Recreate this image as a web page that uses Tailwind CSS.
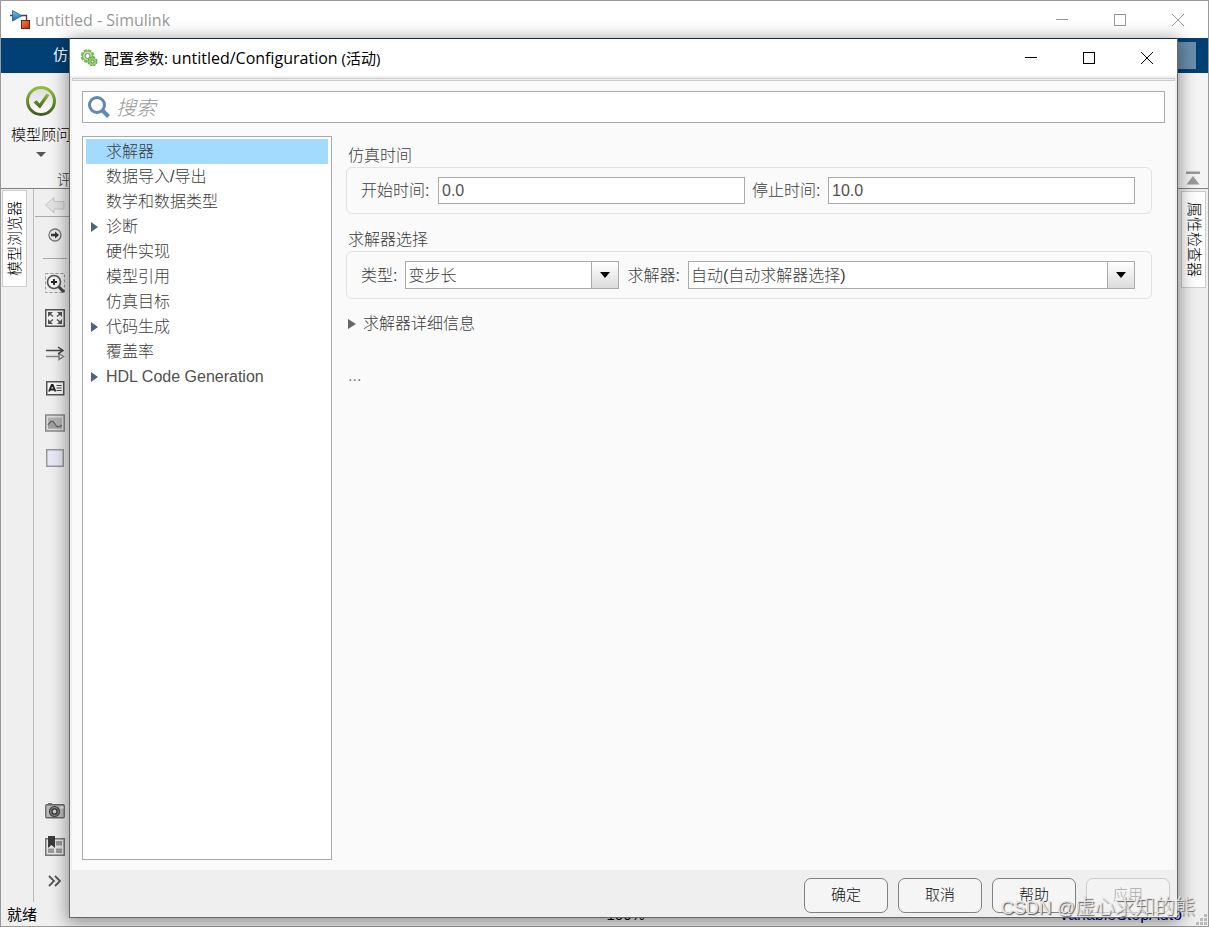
<!DOCTYPE html>
<html lang="zh-CN">
<head>
<meta charset="utf-8">
<title>untitled - Simulink</title>
<script src="https://cdn.jsdelivr.net/npm/@tailwindcss/browser@4"></script>
</head>
<body class="h-screen overflow-hidden bg-[#efefef] font-['Liberation_Sans','Noto_Sans_CJK_SC',sans-serif] text-[15px] text-black">

<!-- Main Simulink window -->
<div class="relative flex h-full flex-col overflow-hidden border border-[#9a9a9a]">
  <header class="flex h-[37px] shrink-0 items-center bg-white">
    <svg class="ml-[9px] h-5 w-[21px]" viewBox="0 0 21 20">
      <defs>
        <linearGradient id="tri" x1="0" y1="0" x2="0" y2="1"><stop offset="0" stop-color="#7fc4ea"/><stop offset="1" stop-color="#0f6ca8"/></linearGradient>
        <linearGradient id="sq" x1="0" y1="0" x2="1" y2="1"><stop offset="0" stop-color="#f08050"/><stop offset="1" stop-color="#c03008"/></linearGradient>
      </defs>
      <path d="M0 5.500h3M11 5.500h5.500V12" fill="none" stroke="#444" stroke-width="1.300"/>
      <path d="M2.500 0.500v10.500L12 5.800z" fill="url(#tri)" stroke="#1b5f8f" stroke-width="0.800"/>
      <rect x="11.500" y="10.500" width="8" height="8" fill="url(#sq)" stroke="#6d2410"/>
    </svg>
    <h1 class="ml-1 flex-1 font-['Open_Sans','Noto_Sans_CJK_SC',sans-serif] text-base text-[#999]">untitled - Simulink</h1>
    <div class="mr-3 flex gap-[22px]">
      <button type="button" aria-label="最小化" class="flex h-9 w-9 items-center justify-center"><svg class="h-3 w-3" viewBox="0 0 12 12"><path d="M0 5.500h12" stroke="#999"/></svg></button>
      <button type="button" aria-label="最大化" class="flex h-9 w-9 items-center justify-center"><svg class="h-3 w-3" viewBox="0 0 12 12"><rect x="0.500" y="0.500" width="11" height="11" fill="none" stroke="#999"/></svg></button>
      <button type="button" aria-label="关闭" class="flex h-9 w-9 items-center justify-center"><svg class="h-3 w-3" viewBox="0 0 12 12"><path d="M0 0l12 12M12 0L0 12" stroke="#999"/></svg></button>
    </div>
  </header>

  <nav class="flex h-[35px] shrink-0 items-center justify-between bg-[#004074] pr-3 pl-[52px] text-white">
    <a href="#sim">仿真</a>
    <div class="h-[27px] w-10 bg-[#6b8ead]"></div>
  </nav>

  <section class="flex h-[116px] shrink-0 items-end justify-between border-b border-[#808080] bg-[#f4f4f4]">
    <div class="flex h-full flex-col items-start pl-[10px]">
      <button type="button" class="flex flex-col items-center pt-3 font-light text-black">
        <svg class="h-8 w-8" viewBox="0 0 32 32">
          <defs><linearGradient id="ring" x1="0" y1="0" x2="0" y2="1"><stop offset="0" stop-color="#93bf3f"/><stop offset="1" stop-color="#3f5f1c"/></linearGradient>
          <linearGradient id="disc" x1="0" y1="0" x2="0" y2="1"><stop offset="0" stop-color="#dcdcdc"/><stop offset="1" stop-color="#fff"/></linearGradient></defs>
          <circle cx="16" cy="16" r="13.500" fill="url(#disc)" stroke="url(#ring)" stroke-width="3"/>
          <path d="M8.500 17.500l3-2.500 3 3.500L21.500 8.500l3 1.500L15 23.500z" fill="url(#ring)"/>
        </svg>
        <span class="mt-[7px] leading-[22px]">模型顾问</span>
        <svg class="mt-[6px] h-[5px] w-[10px]" viewBox="0 0 10 5"><path d="M0 0h10L5 5z" fill="#555"/></svg>
      </button>
      <span class="mt-3 pl-[46px] font-light leading-[22px] text-[#444]">评估</span>
    </div>
    <button type="button" aria-label="折叠" class="mr-2 mb-[3px]"><svg class="h-[14px] w-[14px]" viewBox="0 0 14 14"><path d="M0 0.500h14v2.500H0zM7 5l6.500 8.500H0.500z" fill="#999"/></svg></button>
  </section>

  <div class="flex min-h-0 flex-1">
    <aside class="w-8 shrink-0 pt-px pl-px">
      <button type="button" class="flex h-[97px] w-[25px] items-center justify-center border border-[#ccc] bg-white">
        <span class="rotate-180 font-light leading-6 [text-orientation:sideways] [writing-mode:vertical-rl]">模型浏览器</span>
      </button>
    </aside>
    <div class="flex w-[42px] shrink-0 flex-col items-center border-l border-[#bbb] pl-px">
      <button type="button" aria-label="后退" class="flex h-7 w-full items-center justify-center border-b border-[#aaa] pt-1">
        <svg class="h-5 w-5" viewBox="0 0 20 20"><path d="M0.500 10L9 2.500v4h10v7.500H9v4z" fill="#e2e2e2" stroke="#c6c6c6"/></svg>
      </button>
      <button type="button" aria-label="前进" class="flex h-9 items-center justify-center">
        <svg class="h-[14px] w-[14px]" viewBox="0 0 14 14"><circle cx="7" cy="7" r="6" fill="#e8e8e8" stroke="#777" stroke-width="1.300"/><path d="M3 5.800h4V3.500L11 7l-4 3.500V8.200H3z" fill="#333"/></svg>
      </button>
      <hr class="mt-[5px] mb-[6px] w-6 border-[#aaa]">
      <div class="flex flex-col">
        <button type="button" aria-label="放大" class="flex h-[35px] items-center"><svg class="h-5 w-5" viewBox="0 0 20 20"><rect x="0.500" y="0.500" width="19" height="19" fill="none" stroke="#999" stroke-dasharray="3 2"/><path d="M13 13l6 6" stroke="#444" stroke-width="3"/><circle cx="9" cy="9" r="6.500" fill="#f4f4f4" stroke="#555" stroke-width="1.600"/><path d="M6 9h6M9 6v6" stroke="#222" stroke-width="1.800"/></svg></button>
        <button type="button" aria-label="适应视图" class="flex h-[35px] items-center"><svg class="h-5 w-5" viewBox="0 0 20 20"><rect x="0.750" y="1.750" width="18.500" height="16.500" fill="#f4f4f4" stroke="#555" stroke-width="1.500"/><path d="M3 4h5L3 9zM17 4h-5l5 5zM3 16h5l-5-5zM17 16h-5l5-5z" fill="#555"/><path d="M5 6l3 2.500M15 6l-3 2.500M5 14l3-2.500M15 14l-3-2.500" stroke="#555" stroke-width="1.400"/></svg></button>
        <button type="button" aria-label="信号线" class="flex h-[35px] items-center"><svg class="h-5 w-5" viewBox="0 0 20 20" fill="none"><path d="M1 13.500h14M14 10.500l4.500 3-4.500 3z" stroke="#888" stroke-width="1.500"/><path d="M1 7.500h16M13 4l5 3.500-5 3.500" stroke="#444" stroke-width="1.500"/></svg></button>
        <button type="button" aria-label="注释" class="flex h-[35px] items-center"><svg class="h-5 w-5" viewBox="0 0 20 20"><rect x="1.750" y="3.750" width="17" height="13" fill="#f8f8f8" stroke="#555" stroke-width="1.500"/><path d="M4 13.500L6.700 7h1l2.800 6.500M5 11.500h4.500" fill="none" stroke="#222" stroke-width="1.800"/><path d="M11.500 7.500h5M11.500 10h5M11.500 12.500h5" stroke="#444" stroke-width="1.200"/></svg></button>
        <button type="button" aria-label="图像" class="flex h-[35px] items-center"><svg class="h-5 w-5" viewBox="0 0 20 20"><rect x="0.750" y="2" width="18.500" height="16" fill="#ddd" stroke="#888" stroke-width="1.500"/><rect x="3" y="4.500" width="14" height="11" fill="#b4b4b4"/><path d="M3 12c3-5 5-5 7-1s4 3 7 1v3.500H3z" fill="#a0a0a0"/><path d="M3 12c3-5 5-5 7-1s4 3 7 1" fill="none" stroke="#666" stroke-width="1.400"/></svg></button>
        <button type="button" aria-label="区域" class="flex h-[35px] items-center"><svg class="h-5 w-5" viewBox="0 0 20 20"><rect x="1.750" y="1.750" width="16.500" height="16.500" fill="#e9e8f7" stroke="#999" stroke-width="1.500"/></svg></button>
      </div>
      <div class="mt-auto mb-1 flex flex-col">
        <button type="button" aria-label="截图" class="flex h-[35px] items-center"><svg class="h-5 w-5" viewBox="0 0 20 20"><path d="M3 2h4v2H3z" fill="#777"/><rect x="0.750" y="3.750" width="18.500" height="13" rx="1" fill="#bbb" stroke="#666" stroke-width="1.300"/><circle cx="9.500" cy="10.500" r="5" fill="#888" stroke="#444" stroke-width="1.200"/><circle cx="9.500" cy="10.500" r="2.600" fill="#ccc" stroke="#333" stroke-width="1.300"/><path d="M15.500 5.500h3v2h-3z" fill="#eee"/></svg></button>
        <button type="button" aria-label="库" class="flex h-[35px] items-center"><svg class="h-5 w-5" viewBox="0 0 20 20"><rect x="0.750" y="2.750" width="18.500" height="16.500" fill="#e4e4e4" stroke="#777" stroke-width="1.500"/><path d="M11 5h6v4.500h-6zM3 12.500h6V17H3zM11 12.500h6V17h-6z" fill="#999"/><path d="M3 0h7v12l-3.500-3L3 12z" fill="#3a3a3a"/></svg></button>
        <button type="button" aria-label="更多" class="flex h-[35px] items-center justify-center"><svg class="h-5 w-5" viewBox="0 0 20 20" fill="none" stroke="#555" stroke-width="1.800"><path d="M4 5l5 5-5 5M10 5l5 5-5 5"/></svg></button>
      </div>
    </div>
    <main class="flex-1"></main>
    <aside class="shrink-0 pt-[2px] pr-[2px]">
      <button type="button" class="flex h-[97px] w-[25px] items-center justify-center border border-[#ccc] bg-white">
        <span class="font-light leading-6 [text-orientation:sideways] [writing-mode:vertical-rl]">属性检查器</span>
      </button>
    </aside>
  </div>

  <footer class="flex h-6 shrink-0 items-center pt-[2px] pl-1">
    <span class="w-1/2 pl-[2px]">就绪</span>
    <span class="flex-1">100%</span>
    <span class="text-base text-[#000080]">VariableStepAuto</span>
    <svg class="ml-[14px] h-3 w-3 self-end" viewBox="0 0 12 12"><path d="M8 0h3v3H8zM4 4h3v3H4zM8 4h3v3H8zM0 8h3v3H0zM4 8h3v3H4zM8 8h3v3H8z" fill="#bbb"/></svg>
  </footer>
</div>

<!-- Configuration dialog, floating over the main window -->
<div role="dialog" aria-labelledby="dlg-title" class="absolute top-[38px] right-[31px] bottom-[9px] left-[69px] flex flex-col border border-[#666] border-t-[#152c42] bg-[#efefef] text-base font-light text-[#3c3c3c] shadow-[0_3px_16px_2px_rgba(0,0,0,0.4)]">
  <header class="flex h-[37px] shrink-0 items-center bg-white pl-[10px]">
    <svg class="h-[18px] w-[18px]" viewBox="0 0 18 18">
      <circle cx="7.500" cy="7" r="5.800" fill="#b5dd9a" stroke="#7cbc5c" stroke-width="2.200" stroke-dasharray="3.100 1.450"/>
      <circle cx="7.500" cy="7" r="5" fill="#c4e5ae" stroke="#6bae4c"/>
      <circle cx="7.500" cy="7" r="2.500" fill="#fff" stroke="#58983f"/>
      <circle cx="12.500" cy="12.500" r="4" fill="#9bd07a" stroke="#5ba53f" stroke-width="1.800" stroke-dasharray="2.200 0.940"/>
      <circle cx="12.500" cy="12.500" r="3.500" fill="#9bd07a"/>
      <circle cx="12.500" cy="12.500" r="1.500" fill="#fff" stroke="#4b8a35"/>
    </svg>
    <h2 id="dlg-title" class="ml-[6px] flex-1 font-['Open_Sans','Noto_Sans_CJK_SC',sans-serif] text-base font-normal text-black"><span class="text-[15px]">配置参数: </span>untitled/Configuration<span class="text-[15px]"> (活动)</span></h2>
    <div class="mr-3 flex gap-[22px]">
      <button type="button" aria-label="最小化" class="flex h-9 w-9 items-center justify-center"><svg class="h-3 w-3" viewBox="0 0 12 12"><path d="M0 5.500h12" stroke="#000"/></svg></button>
      <button type="button" aria-label="最大化" class="flex h-9 w-9 items-center justify-center"><svg class="h-3 w-3" viewBox="0 0 12 12"><rect x="0.500" y="0.500" width="11" height="11" fill="none" stroke="#000"/></svg></button>
      <button type="button" aria-label="关闭" class="flex h-9 w-9 items-center justify-center"><svg class="h-3 w-3" viewBox="0 0 12 12"><path d="M0 0l12 12M12 0L0 12" stroke="#000"/></svg></button>
    </div>
  </header>
  <div class="mx-[2px] mt-[2px] h-[3px] shrink-0 border border-[#ccc] bg-[#efefef]"></div>

  <div class="mx-[2px] flex min-h-0 flex-1 flex-col gap-[13px] bg-[#fafafa] p-[10px]">
    <label class="flex h-8 shrink-0 items-center gap-[6px] border border-[#aaa] bg-white pl-[5px]">
      <svg class="h-[22px] w-[22px]" viewBox="0 0 22 22" fill="none" stroke="#6088b4"><circle cx="9" cy="9" r="7.500" stroke-width="3"/><path d="M14.500 14.500l6 6" stroke-width="4"/></svg>
      <input type="search" aria-label="搜索" placeholder="搜索" class="h-full flex-1 bg-transparent pt-[2px] text-xl font-light italic outline-none placeholder:text-[#999]">
    </label>

    <div class="flex min-h-0 flex-1 gap-[14px]">
      <ul class="w-[250px] shrink-0 border border-[#aaa] bg-white px-[3px] py-[2px] leading-6">
        <li class="bg-[#a3dbff] pt-px pl-5"><a href="#solver">求解器</a></li>
        <li class="pt-px pl-5"><a href="#data">数据导入/导出</a></li>
        <li class="pt-px pl-5"><a href="#math">数学和数据类型</a></li>
        <li class="flex items-center pt-px pl-[5px]"><svg class="mr-2 h-[10px] w-[7px]" viewBox="0 0 7 10"><path d="M0 0l7 5-7 5z" fill="#4b6580"/></svg><a href="#diag">诊断</a></li>
        <li class="pt-px pl-5"><a href="#hw">硬件实现</a></li>
        <li class="pt-px pl-5"><a href="#ref">模型引用</a></li>
        <li class="pt-px pl-5"><a href="#target">仿真目标</a></li>
        <li class="flex items-center pt-px pl-[5px]"><svg class="mr-2 h-[10px] w-[7px]" viewBox="0 0 7 10"><path d="M0 0l7 5-7 5z" fill="#4b6580"/></svg><a href="#code">代码生成</a></li>
        <li class="pt-px pl-5"><a href="#cov">覆盖率</a></li>
        <li class="flex items-center pt-px pl-[5px]"><svg class="mr-2 h-[10px] w-[7px]" viewBox="0 0 7 10"><path d="M0 0l7 5-7 5z" fill="#4b6580"/></svg><a href="#hdl" class="text-[#505050]">HDL Code Generation</a></li>
      </ul>

      <form class="min-w-0 flex-1 pt-2 pr-[13px]">
        <h3 class="h-[23px] pl-[2px] leading-6">仿真时间</h3>
        <div class="flex h-[47px] items-center gap-[7px] rounded-md border border-[#e2e2e2] pr-4 pl-[14px]">
          <label for="start" class="w-[70px] pt-px">开始时间:</label>
          <input id="start" type="text" value="0.0" class="h-[27px] min-w-0 flex-1 border border-[#aaa] bg-white px-[3px] text-[#505050] outline-none">
          <label for="stop" class="w-[69px] pt-px">停止时间:</label>
          <input id="stop" type="text" value="10.0" class="h-[27px] min-w-0 flex-1 border border-[#aaa] bg-white px-[3px] text-[#505050] outline-none">
        </div>
        <h3 class="mt-[14px] h-[23px] pl-[2px] leading-6">求解器选择</h3>
        <div class="flex h-12 items-center gap-2 rounded-md border border-[#e2e2e2] pr-4 pl-[14px]">
          <label for="type" class="pt-[2px]">类型:</label>
          <div class="relative w-[214px]">
            <select id="type" class="h-7 w-full appearance-none border border-[#aaa] bg-white px-[2px] pt-[2px] outline-none"><option>变步长</option></select>
            <span class="pointer-events-none absolute inset-y-0 right-0 flex w-7 items-center justify-center border border-[#aaa] bg-linear-to-b from-white to-[#dcdcdc]"><svg class="h-[6px] w-[10px]" viewBox="0 0 10 6"><path d="M0 0h10L5 6z"/></svg></span>
          </div>
          <label for="solver-sel" class="pt-[2px]">求解器:</label>
          <div class="relative min-w-0 flex-1">
            <select id="solver-sel" class="h-7 w-full appearance-none border border-[#aaa] bg-white px-[2px] pt-[2px] outline-none"><option>自动(自动求解器选择)</option></select>
            <span class="pointer-events-none absolute inset-y-0 right-0 flex w-7 items-center justify-center border border-[#aaa] bg-linear-to-b from-white to-[#dcdcdc]"><svg class="h-[6px] w-[10px]" viewBox="0 0 10 6"><path d="M0 0h10L5 6z"/></svg></span>
          </div>
        </div>
        <button type="button" class="mt-[13px] flex items-center gap-[7px] pl-[2px] leading-6"><svg class="h-[10px] w-2" viewBox="0 0 8 10"><path d="M0 0l8 5-8 5z" fill="#666"/></svg>求解器详细信息</button>
        <p class="mt-7 pl-[2px] leading-6 text-[#777]">...</p>
      </form>
    </div>
  </div>

  <footer class="flex h-[47px] shrink-0 items-center justify-end gap-[10px] pt-1 pr-[7px] pb-px text-[15px] text-[#111]">
    <button type="button" class="h-[35px] w-[84px] rounded-[7px] border border-[#808080] bg-[#f5f5f5]">确定</button>
    <button type="button" class="h-[35px] w-[84px] rounded-[7px] border border-[#808080] bg-[#f5f5f5]">取消</button>
    <button type="button" class="h-[35px] w-[84px] rounded-[7px] border border-[#808080] bg-[#f5f5f5]">帮助</button>
    <button type="button" disabled class="h-[35px] w-[84px] rounded-[7px] border border-[#ccc] bg-[#f3f3f3] text-[#aaa]">应用</button>
  </footer>
</div>

<!-- Watermark -->
<p class="pointer-events-none absolute right-[14px] bottom-[5px] text-xl font-light leading-7 text-[#e4e4e4] [text-shadow:1px_1px_1px_#555]"><span class="text-lg">CSDN @</span>虚心求知的熊</p>
</body>
</html>
